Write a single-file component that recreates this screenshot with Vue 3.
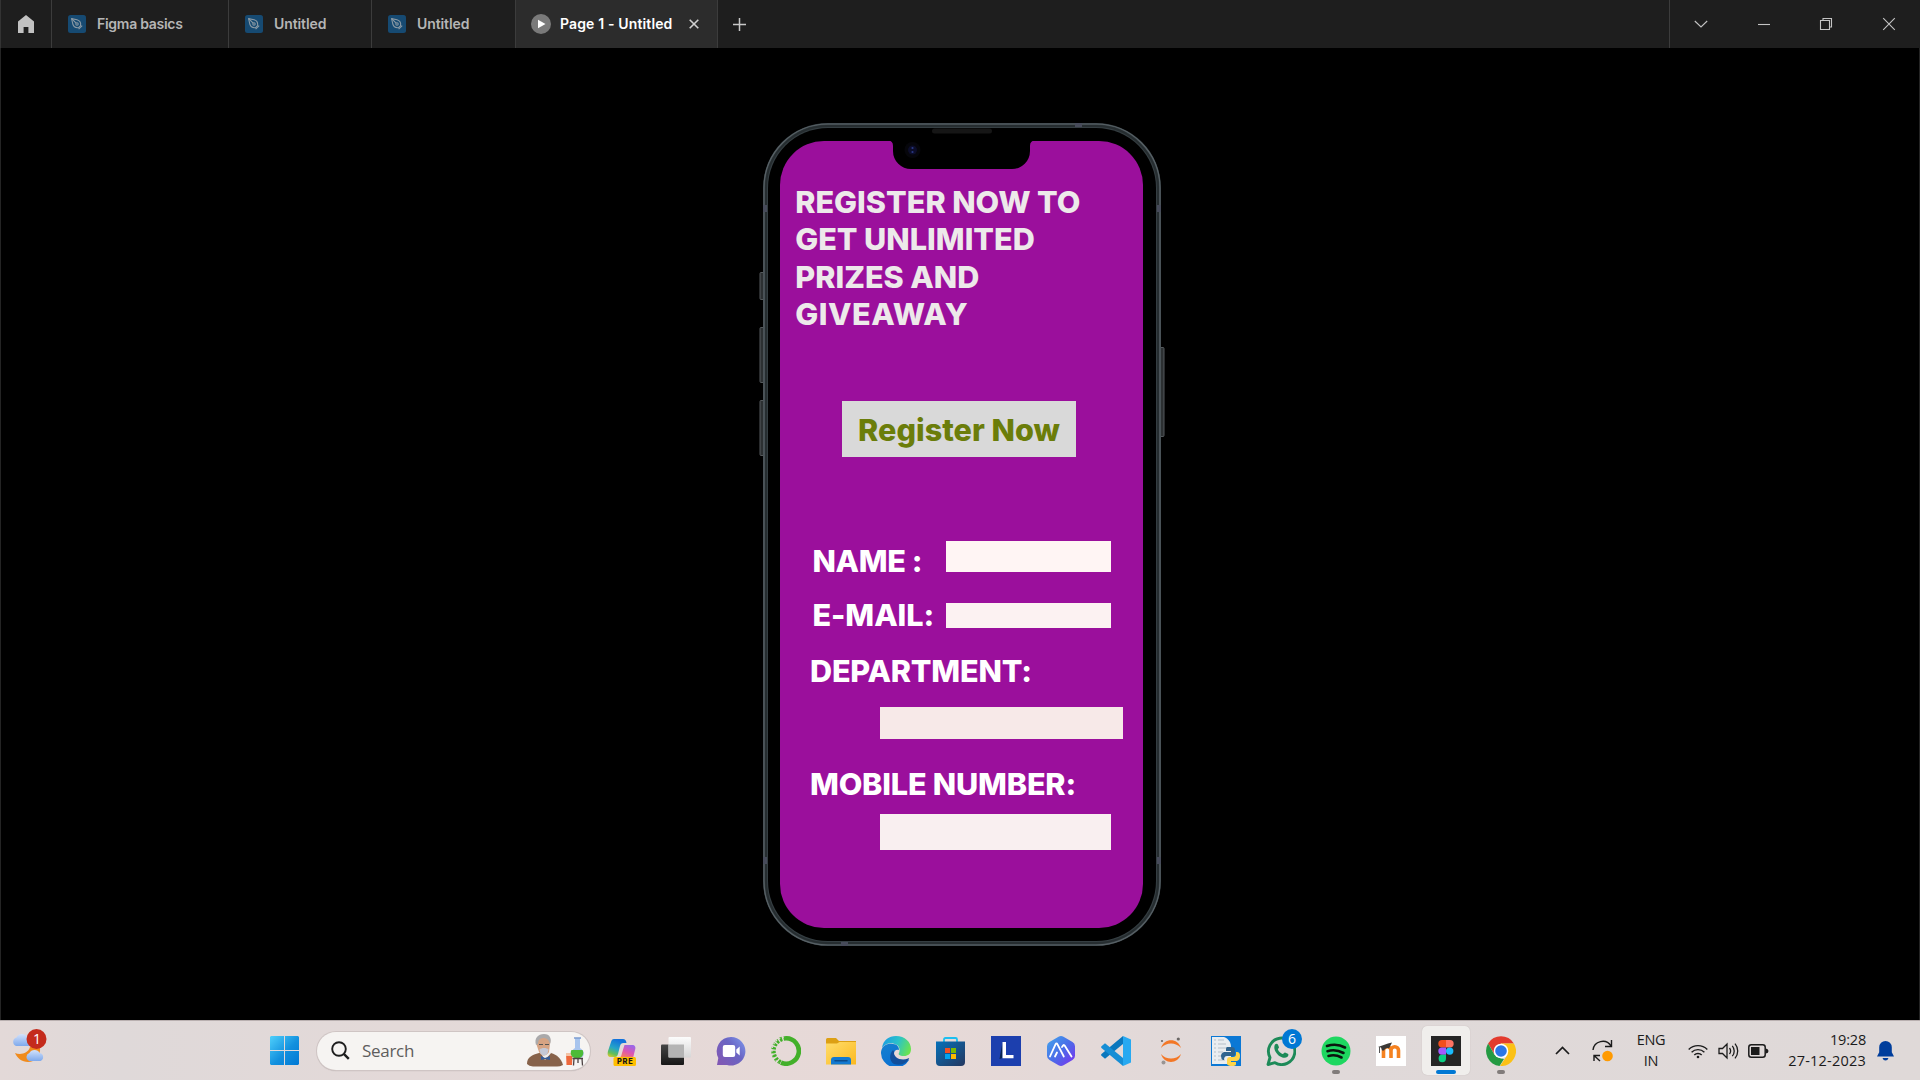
<script setup>
const tabs = [
  { label: 'Figma basics', width: 177, tight: true },
  { label: 'Untitled', width: 143 },
  { label: 'Untitled', width: 144 },
]
const headline = ['REGISTER NOW TO', 'GET UNLIMITED', 'PRIZES AND', 'GIVEAWAY']
</script>

<template>
  <div class="desktop">
    <header class="tabbar">
      <div class="home">
        <svg width="16" height="18" viewBox="0 0 16 18"><path d="M8 0 0 6.6V18h5.6v-6h4.8v6H16V6.6z" fill="#c2c2c2" /></svg>
      </div>
      <div v-for="(t, i) in tabs" :key="i" class="tab" :class="{ tight: t.tight }" :style="{ width: t.width + 'px' }">
        <svg class="file" width="18" height="18" viewBox="0 0 18 18">
          <rect width="18" height="18" rx="2.5" fill="#164a72" />
          <g fill="none" stroke="#8b9aa5" stroke-width="1.1" stroke-linejoin="round">
            <path d="M3.600 3.600 9 4.800c2.800.8 4 3 3.600 5.800L10.600 12.600C7.800 13 5.600 11.800 4.800 9z" />
            <path d="m10.600 14.200 3.600-3.600" /><path d="M3.600 3.600 8.200 8.200" /><circle cx="9" cy="9" r="1.200" />
          </g>
        </svg>
        <span>{{ t.label }}</span>
      </div>
      <div class="tab active">
        <svg width="20" height="20" viewBox="0 0 20 20"><circle cx="10" cy="10" r="10" fill="#7a7a7a" /><path d="M7 5.800 14.500 10 7 14.200z" fill="#fff" /></svg>
        <span>Page 1 - Untitled</span>
        <svg class="x" width="10" height="10" viewBox="0 0 10 10"><path d="m.7.7 8.600 8.600M9.300.7.7 9.300" stroke="#d0d0d0" stroke-width="1.600" /></svg>
      </div>
      <div class="plus">
        <svg width="13" height="13" viewBox="0 0 13 13"><path d="M6.500 0v13M0 6.500h13" stroke="#c8c8c8" stroke-width="1.500" /></svg>
      </div>
      <div class="controls">
        <svg viewBox="0 0 14 14"><path d="m.8 4 6.200 6 6.200-6" /></svg>
        <svg viewBox="0 0 14 14"><path d="M1 7.500h12" /></svg>
        <svg viewBox="0 0 14 14"><path d="M1.500 3.500h9v9h-9zM4 3.500v-2h8.500V10h-2" /></svg>
        <svg viewBox="0 0 14 14"><path d="m1.200 1.200 11.600 11.600M12.800 1.200 1.200 12.800" /></svg>
      </div>
    </header>

    <main class="stage">
      <div class="phone">
        <svg class="frame" width="406" height="823" viewBox="0 0 406 823">
          <g fill="#2c3032" stroke="#54595c" stroke-width="1">
            <rect x="1" y="149.500" width="5" height="27" rx="1" />
            <rect x="1" y="204.500" width="5" height="55" rx="1" />
            <rect x="1" y="277.500" width="5" height="55" rx="1" />
            <rect x="400.500" y="224.500" width="4.500" height="89" rx="1" />
          </g>
          <rect x="4" y="0" width="398" height="823" rx="65" fill="#353e42" />
          <rect x="5" y="1" width="396" height="821" rx="64" fill="none" stroke="#586166" stroke-width="1.200" />
          <rect x="7" y="3" width="392" height="817" rx="62" fill="none" stroke="#262d30" stroke-width="2" />
          <rect x="9" y="5" width="388" height="813" rx="60" fill="#000" />
          <g fill="#474b5a"><rect x="316" y="0" width="7" height="4" /><rect x="82" y="819" width="7" height="4" /><rect x="4" y="82" width="4" height="7" /><rect x="398" y="82" width="4" height="7" /><rect x="4" y="734" width="4" height="7" /><rect x="398" y="734" width="4" height="7" /></g>
        </svg>
        <section class="screen">
          <svg class="notch" width="147" height="46" viewBox="0 0 147 46">
            <path d="M0 17.500Q5 17.500 5 23v5a18 18 0 0 0 18 18h101a18 18 0 0 0 18-18v-5q0-5.500 5-5.500V14H0z" fill="#000" />
            <rect x="44" y="5.500" width="60" height="5" rx="2.500" fill="#161616" />
            <circle cx="24.500" cy="27" r="8" fill="#06060b" /><circle cx="24.500" cy="27" r="4.500" fill="#0c0d2a" />
            <circle cx="24.500" cy="25" r="1.100" fill="#2b3a86" /><circle cx="24.500" cy="29" r="1.100" fill="#2b3a86" />
          </svg>
          <h1><span v-for="l in headline" :key="l">{{ l }}</span></h1>
          <button class="cta">Register Now</button>
          <div class="row name"><label>NAME :</label><i></i></div>
          <div class="row mail"><label>E-MAIL:</label><i></i></div>
          <label class="dept">DEPARTMENT:</label>
          <i class="dept-box"></i>
          <label class="mobile">MOBILE NUMBER:</label>
          <i class="mobile-box"></i>
        </section>
      </div>
    </main>

    <footer class="taskbar">
      <div class="weather">
        <svg width="36" height="36" viewBox="0 0 36 36">
          <defs><linearGradient id="cl" x1="0" y1="0" x2="0" y2="1"><stop offset="0" stop-color="#d3e2fb" /><stop offset="1" stop-color="#7ea9ec" /></linearGradient></defs>
          <path d="M3 25c5 2 13 1 15-6l10 0c1 9-5 15-12 15-6 0-11-4-13-9z" fill="#f08b1d" />
          <path d="M4 18a4.500 4.500 0 0 1 .5-8.500 6 6 0 0 1 11 0A4.500 4.500 0 0 1 17 18z" fill="url(#cl)" />
          <path d="M17 33a4.300 4.300 0 0 1 .3-8 6 6 0 0 1 10.500 0 4.200 4.200 0 0 1 .7 8z" fill="url(#cl)" />
          <circle cx="24.500" cy="11" r="10" fill="#c42b1c" />
        </svg>
        <b>1</b>
      </div>

      <div class="center">
        <svg class="start" width="29" height="29" viewBox="0 0 29 29">
          <defs><linearGradient id="wn" x1="0" y1="0" x2="1" y2="1"><stop offset="0" stop-color="#4fd0fb" /><stop offset=".55" stop-color="#1290de" /><stop offset="1" stop-color="#0078d4" /></linearGradient></defs>
          <path d="M1 0h13v14H0V1zM15 0h13l1 1v13H15zM0 15h14v14H1l-1-1zM15 15h14v13l-1 1H15z" fill="url(#wn)" />
        </svg>
        <div class="search">
          <svg width="19" height="19" viewBox="0 0 19 19" fill="none" stroke="#1d1d1d"><circle cx="8" cy="8" r="6.800" stroke-width="1.900" /><path d="m12.800 12.800 5 5" stroke-width="2.400" /></svg>
          <span>Search</span>
          <svg class="art" width="57" height="34" viewBox="0 0 57 34">
            <path d="M0 30c0-7 5-9 12-11l12 0c6 2 10 5 12 12q-3 1.500-6 1.500H6Q2 32 0 30z" fill="#87624a" />
            <path d="m13 18 5 8 7-8z" fill="#eee" />
            <path d="M9 9c0-5 3-8 8-8s7 3 6 9l-1 8c-2 4-8 5-10 0z" fill="#d6a383" />
            <path d="M9 11C7 4 11 0 17 0c6 0 8 5 6 10-1-4-3-6-6-6-4 0-6 2-6 6z" fill="#aaa9aa" />
            <path d="M12.500 15.500c2-2 7-2 9 0l-1 4q-3.500 4-7 0z" fill="#c4c8d6" />
            <path d="M12 10.500h4M18 10.500h4" stroke="#555" /><path d="m14 22 4 2 5-2v4l-5-1-4 1z" fill="#355c99" />
            <path d="M39 19h6.500l-.5 12h-5.500z" fill="#ee683c" /><path d="M39 19h6.500v3H39z" fill="#f3c4a8" />
            <path d="M48 4h5v10c5 3 5 9 0 10h-5c-5-2-4-8 0-10z" fill="#a8c4ed" />
            <path d="M44.500 16h11c2 3 0 8-4 8h-3c-4 0-6-5-4-8z" fill="#4dbb37" /><path d="M47 4h7" stroke="#7d9ed0" stroke-width="1.500" />
            <path d="M45.500 24.500H56M47 24.500l-.5 7M55 24.500l.5 7M51 24.500V29" stroke="#4d4243" stroke-width="1.300" />
          </svg>
        </div>

        <div class="apps">
          <div class="app">
            <svg viewBox="0 0 30 30"><defs>
              <linearGradient id="cp1" x1=".4" y1="0" x2="0" y2="1"><stop offset="0" stop-color="#1272dc" /><stop offset=".45" stop-color="#25a5c7" /><stop offset=".75" stop-color="#65bf55" /><stop offset="1" stop-color="#f2cb27" /></linearGradient>
              <linearGradient id="cp2" x1=".7" y1="0" x2=".2" y2="1"><stop offset="0" stop-color="#9a67e8" /><stop offset=".5" stop-color="#dd55b1" /><stop offset="1" stop-color="#f88454" /></linearGradient></defs>
              <path d="M8 3h9c2 0 3 1 3.500 4h-3c-2 0-3 1-3.500 3l-2 8c-1 3-2 3-4 3H5c-3 0-4-2-3-6L5 6c.6-2 1.300-3 3-3z" fill="url(#cp1)" />
              <path d="M18.500 9H26c3 0 4 2 3 5l-2 8H13.500c1.500-1 2-3 2.500-5z" fill="url(#cp2)" />
              <rect x="7.500" y="21" width="22.500" height="9" rx="1.500" fill="#ffbf00" />
              <text x="19.200" y="28.200" text-anchor="middle" font-size="7.400" font-weight="800" letter-spacing=".7" fill="#151515">PRE</text></svg>
          </div>
          <div class="app">
            <svg viewBox="0 0 30 30"><defs><linearGradient id="tv" x1="0" y1="0" x2="0" y2="1"><stop offset="0" stop-color="#454545" /><stop offset="1" stop-color="#171717" /></linearGradient>
              <linearGradient id="tg" x1="0" y1="0" x2="0" y2="1"><stop offset="0" stop-color="#fcfcfc" /><stop offset="1" stop-color="#d6d6d6" /></linearGradient></defs>
              <rect x="0" y="8.500" width="23" height="20.500" rx="1" fill="url(#tv)" /><rect x="7.500" y="1" width="22.500" height="20.500" rx="1" fill="url(#tg)" /><path d="M7.500 8.500H23v13H7.500z" fill="#b4b4b4" /></svg>
          </div>
          <div class="app">
            <svg viewBox="0 0 30 30"><defs><linearGradient id="ch" x1="1" y1="0" x2="0" y2=".8"><stop offset="0" stop-color="#7f9cf0" /><stop offset=".45" stop-color="#6a65c4" /><stop offset="1" stop-color="#8058b4" /></linearGradient></defs>
              <path d="M15 1a14.300 14.300 0 1 1-4 28H1l1.300-7A14.300 14.300 0 0 1 15 1z" fill="url(#ch)" /><rect x="6.800" y="9" width="12.400" height="12" rx="2" fill="#fff" /><path d="m20.300 13.500 3.400-3v9l-3.400-3z" fill="#fff" /></svg>
          </div>
          <div class="app">
            <svg viewBox="0 0 30 30" fill="none" stroke="#43b02a"><path d="M15 2.300a12.700 12.700 0 1 1-5 24.300" stroke-width="4.600" /><path d="M15 2.300A12.700 12.700 0 0 0 10 26.600" stroke-width="4.400" stroke-dasharray="2.500 1.400" /><path d="M13 1A14 14 0 0 0 8 27" stroke="#e3d9d7" stroke-width="1.200" stroke-dasharray="1.800 2" /></svg>
          </div>
          <div class="app">
            <svg viewBox="0 0 30 30"><defs><linearGradient id="fo" x1="0" y1="0" x2="1" y2="1"><stop offset="0" stop-color="#ffdd6c" /><stop offset="1" stop-color="#fbb91f" /></linearGradient></defs>
              <path d="M0 3.500Q0 2 1.500 2H10l3 3h17v8H0z" fill="#dda014" /><path d="M0 7.500h11l2.500-1.500H30v22.500H0z" fill="url(#fo)" /><path d="M5 28.500V24q0-3 3-3h14q3 0 3 3v4.500z" fill="#1279d0" /><path d="M9 24.800h12" stroke="#0b4c8c" stroke-width="1.500" stroke-linecap="round" /></svg>
          </div>
          <div class="app">
            <svg viewBox="0 0 30 30"><defs>
              <linearGradient id="ed1" x1="0" y1=".3" x2="1" y2=".6"><stop offset="0" stop-color="#1b9de2" /><stop offset=".5" stop-color="#2bc3c9" /><stop offset="1" stop-color="#6be44e" /></linearGradient>
              <linearGradient id="ed2" x1="0" y1="0" x2=".6" y2="1"><stop offset="0" stop-color="#1581cf" /><stop offset="1" stop-color="#0a6fd3" /></linearGradient></defs>
              <path d="M1 12C2 4 8 0 15 0c9 0 15 6 15 13 0 5-3 7-7 7-5 0-6-2-5-3 1-2 1-6-2-8C11 6 4 7 1 12z" fill="url(#ed1)" />
              <path d="M0 16C1 9 7 7 12 8c4 0 6 3 6 6-3-1-5 1-5 4 0 6 7 10 14 6l1 0A15 15 0 0 1 0 16z" fill="url(#ed2)" />
              <path d="M12 14c-4 4-4 11 1 14 6 2 12 0 15-5 .5-.8 0-1-1-.500-7 3-15-1-14-7z" fill="#114f9c" /></svg>
          </div>
          <div class="app">
            <svg viewBox="0 0 30 30"><defs><linearGradient id="st" x1="0" y1="0" x2="1" y2="1"><stop offset="0" stop-color="#0671b9" /><stop offset="1" stop-color="#25375f" /></linearGradient></defs>
              <path d="M8 6V3.500Q8 2 9.500 2h10Q21 2 21 3.500V6" fill="none" stroke="#1cbff0" stroke-width="1.800" /><path d="M0 5.500h29V26q0 4-4 4H4q-4 0-4-4z" fill="url(#st)" />
              <path d="M9 12h5v5H9z" fill="#f25022" /><path d="M15 12h5v5h-5z" fill="#7fba00" /><path d="M9 18h5v5H9z" fill="#00a4ef" /><path d="M15 18h5v5h-5z" fill="#ffb900" /></svg>
          </div>
          <div class="app">
            <svg viewBox="0 0 30 30"><path d="M0 0h30v30H0z" fill="#1c3fae" /><path d="m11.500 6-3 17 3-1z" fill="#092450" /><path d="M11.500 6h3.500v13h7.500v3.200h-11z" fill="#fff" /></svg>
          </div>
          <div class="app">
            <svg viewBox="0 0 30 30"><defs><linearGradient id="hx" x1="0" y1="0" x2="1" y2="1"><stop offset="0" stop-color="#42a7ec" /><stop offset=".5" stop-color="#4a6de8" /><stop offset="1" stop-color="#7e2ff0" /></linearGradient></defs>
              <path d="M12.500.7q2.500-1.400 5 0l9 5.200q2.500 1.400 2.500 4.300v9.600q0 2.900-2.500 4.300l-9 5.200q-2.500 1.400-5 0l-9-5.200Q1 22.700 1 19.800v-9.600q0-2.900 2.500-4.300z" fill="url(#hx)" />
              <path d="M4 20.500 9.500 8.300q1-2 2 0l6.300 12.200M9 20.500l2-4M16 11l1.200-1.600q.8-.9 1.600.3L25.500 20.500" fill="none" stroke="#fff" stroke-width="1.800" stroke-linejoin="round" stroke-linecap="round" /></svg>
          </div>
          <div class="app">
            <svg viewBox="0 0 30 30"><path d="M22 0 30 3.500v23L22 30z" fill="#27a9f1" /><path d="M22 0v8L4 22.800l-3.500-3q-.8-.9 0-1.800z" fill="#0a77bd" /><path d="M22 30v-8L4 7.200l-3.500 3q-.8.9 0 1.800z" fill="#168ed5" /></svg>
          </div>
          <div class="app">
            <svg viewBox="0 0 30 30"><path d="M5 12C8 1.500 22 1.500 25 12 20 6 10 6 5 12zM5 18c3 10.500 17 10.500 20 0-5 6-15 6-20 0z" fill="#f37726" /><circle cx="22.300" cy="3" r="1.600" fill="#6b6766" /><circle cx="6" cy="5" r="1.100" fill="#6b6766" /><circle cx="7.500" cy="26.500" r="2" fill="#999594" /></svg>
          </div>
          <div class="app">
            <svg viewBox="0 0 30 30"><path d="M0 0h30v30H0z" fill="#0b78d5" /><path d="M1 1h12c5 2 7 6 7 10v17H1z" fill="#e9edf0" /><path d="M3 4h2M7 4h6M3 8h2M7 8h8M3 12h2M7 12h8M3 16h2M7 16h5M3 20h2M7 20h4M3 24h2M7 24h7" stroke="#b5bfc8" stroke-width="1.200" />
              <path d="M16 11h5q3 0 3 3v4q0 2-3 2h-5q-3 0-3 4h-1q-2-1-2-4t3-4h7v-1h-5v-2q0-2 1-2z" fill="#2f648f" /><path d="M25 16h1q3 0 3 4t-3 5h-6v1h5v2q0 2-4 2t-5-2v-4q0-3 3-3h3q3 0 3-3z" fill="#ffd447" /></svg>
          </div>
          <div class="app">
            <svg viewBox="0 0 30 30"><path d="M2 28.500 4 21.500A13.200 13.200 0 1 1 9 26.700z" fill="none" stroke="#1d8a58" stroke-width="2.900" stroke-linejoin="round" /><path d="M9 8.500c1-1 2.500-.8 3 .3l1 2.500c0 1-1.500 1.500-1 2.400 1 2 2.500 3.400 4.500 4.200 1 .3 1.500-1.500 2.500-1.500l2.800 1.300c1 .6.8 2-.3 3.100-5 4.200-16-5.300-12.500-12.300z" fill="#1d8a58" /></svg>
            <span class="badge">6</span>
          </div>
          <div class="app running">
            <svg viewBox="0 0 30 30"><circle cx="15" cy="15" r="14.500" fill="#1ed760" /><path d="M6 10c6-2 13-1.300 18 1.500M6.500 15.200c5-1.500 11-.9 16 1.800M7.500 20c4-1.200 9-.7 13 1.500" fill="none" stroke="#0b140e" stroke-width="2.600" stroke-linecap="round" /></svg>
          </div>
          <div class="app">
            <svg viewBox="0 0 30 30"><path d="M0 0h30v30H0z" fill="#fff" /><path d="M7.500 22v-7.500a3.700 3.700 0 0 1 7.500 0V22M15 14.500a3.700 3.700 0 0 1 7.500 0V22" fill="none" stroke="#f58220" stroke-width="3.600" /><path d="m2 11 10-3.500 4-1-3 6c-2-1-4 0-5 2H6l-1-3z" fill="#3a3836" /><path d="M3.500 11v6" stroke="#555" /></svg>
          </div>
          <div class="app current">
            <svg viewBox="0 0 30 30"><path d="M0 0h30v30H0z" fill="#252525" /><path d="M15 4h-4a3.700 3.700 0 0 0 0 7.400h4z" fill="#f24e1e" /><path d="M15 4h4a3.700 3.700 0 0 1 0 7.400h-4z" fill="#ff7262" /><path d="M15 11.400h-4a3.700 3.700 0 0 0 0 7.400h4z" fill="#a259ff" /><circle cx="18.700" cy="15.100" r="3.700" fill="#1abcfe" /><path d="M15 18.800h-4a3.700 3.700 0 1 0 4 3.700z" fill="#0acf83" /></svg>
          </div>
          <div class="app running">
            <svg viewBox="0 0 30 30"><path d="M2.100 7.500a15 15 0 0 1 25.800 0H15l-6.400 11z" fill="#e33b2e" /><path d="M2.100 7.500 8.500 18.700 15 22.500l3 .5-4.500 7A15 15 0 0 1 2.100 7.500z" fill="#249a42" /><path d="M15 7.500h12.900A15 15 0 0 1 14 30l7.500-11.200z" fill="#fbc116" /><circle cx="15" cy="15" r="7.300" fill="#fff" /><circle cx="15" cy="15" r="5.800" fill="#2b76e5" /></svg>
          </div>
        </div>
      </div>

      <div class="tray">
        <svg class="up" width="15" height="9" viewBox="0 0 15 9"><path d="m1 8 6.500-6.500L14 8" fill="none" stroke="#1b1b1b" stroke-width="1.700" /></svg>
        <svg class="sync" width="22" height="24" viewBox="0 0 22 24" fill="none" stroke="#1b1b1b" stroke-width="1.400"><path d="M1 11C2 2 14-1 19 7M19.500 1v6.500H13M8 22 2 16.500M8 16.500H2V22" /><circle cx="15.500" cy="17" r="5.300" fill="#ff9a00" stroke="none" /></svg>
        <div class="lang"><span>ENG</span><span>IN</span></div>
        <svg class="wifi" width="20" height="16" viewBox="0 0 20 16" fill="none" stroke="#1b1b1b" stroke-width="1.400"><path d="M.7 6.500a13 13 0 0 1 18.600 0M3.600 9.300a9 9 0 0 1 12.800 0M6.300 12a5.200 5.200 0 0 1 7.400 0" /><circle cx="10" cy="14" r="1.300" fill="#1b1b1b" stroke="none" /></svg>
        <svg class="vol" width="21" height="18" viewBox="0 0 21 18" fill="none" stroke="#1b1b1b" stroke-width="1.300"><path d="M1 6.500v5h3.500L9 16V2L4.500 6.500zM11.500 6a5 5 0 0 1 0 6M14.300 3.800a8 8 0 0 1 0 10.400M17 1.600a11.500 11.500 0 0 1 0 14.800" /></svg>
        <svg class="bat" width="21" height="14" viewBox="0 0 21 14"><rect x=".8" y=".8" width="16.400" height="12.400" rx="2.500" fill="none" stroke="#1b1b1b" stroke-width="1.500" /><path d="M3 3h8.500v8H3z" fill="#1b1b1b" /><path d="M18 4.500q2.500.5 2.500 2.500T18 9.500z" fill="#1b1b1b" /></svg>
        <div class="clock"><span>19:28</span><span class="date">27-12-2023</span></div>
        <svg class="bell" width="17" height="20" viewBox="0 0 17 20"><path d="M8.500 0a6.300 6.300 0 0 1 6.300 6.300v5L17 15.500H0l2.200-4.200v-5A6.300 6.300 0 0 1 8.500 0zM5.500 17h6q-.8 2.500-3 2.500t-3-2.500z" fill="#003e9c" /></svg>
      </div>
    </footer>
  </div>
</template>

<style>
body { background: #000; overflow: hidden; }
</style>

<style scoped>
* { box-sizing: border-box; }
.desktop { width: 1920px; height: 1080px; display: flex; flex-direction: column; background: #000; font-family: Inter, sans-serif; }
.desktop svg { display: block; flex: none; }

.tabbar { height: 48px; flex: none; display: flex; background: #1e1e1e; border-left: 1px solid #333; }
.home { width: 51px; padding: 15px 0 0 17px; border-right: 1px solid #3c3c3c; }
.tab { display: flex; align-items: center; padding-left: 16px; border-right: 1px solid #3c3c3c; color: #b5b5b5; font-size: 14px; font-weight: 600; letter-spacing: -.1px; white-space: nowrap; }
.tab.tight { letter-spacing: -.28px; }
.tab .file { margin-right: 11px; }
.tab span { margin-top: -1px; }
.tab.active { width: 202px; padding-left: 15px; background: #2c2c2c; color: #fff; letter-spacing: .14px; }
.active span { margin-left: 9px; width: 113px; }
.active .x { margin-left: 15.500px; }
.plus { padding: 18px 0 0 15px; }
.controls { margin-left: auto; width: 251px; display: flex; align-items: center; padding-left: 24px; gap: 48.700px; border-left: 1px solid #3c3c3c; }
.controls svg { width: 14px; height: 14px; fill: none; stroke: #c4c4c4; stroke-width: 1.1; }

.stage { height: 972px; flex: none; border: solid #242424; border-width: 0 1px; padding: 75px 0 0 758px; }
.phone { position: relative; width: 406px; height: 823px; padding: 18px 0 0 21px; }
.frame { position: absolute; left: 0; top: 0; }
.screen { position: relative; width: 363px; height: 787px; border-radius: 44px; background: #9b0f9c; padding-top: 42px; display: flex; flex-direction: column; align-items: flex-start; }
.notch { position: absolute; left: 108px; top: -18px; }
h1 { margin: 0; padding-left: 15.200px; height: 150px; font-size: 30.600px; font-weight: 770; line-height: 37.350px; letter-spacing: 0; word-spacing: -.2px; color: #ede9ea; white-space: nowrap; }
h1 span { display: block; }
h1 span:last-child { letter-spacing: .5px; }
.cta { margin: 68.200px 0 0 62px; width: 234px; height: 56px; flex: none; border: 0; padding: 1px 0 0; background: #d9d9d9; color: #6b7d0a; font: 800 30.600px Inter, sans-serif; white-space: nowrap; }
label { font-size: 30.600px; font-weight: 770; line-height: 38px; height: 38px; flex: none; color: #fff; letter-spacing: -.2px; white-space: nowrap; }
i { display: block; flex: none; }
.row { display: flex; align-items: flex-start; padding-left: 32px; height: 39px; flex: none; }
.row label { width: 134px; padding-left: .5px; }
.row i { width: 165px; }
.name { margin-top: 83.800px; }
.name label { margin-top: 1px; letter-spacing: -.4px; }
.name i { height: 31px; background: #fff5f4; }
.mail { margin-top: 16px; }
.mail label { margin-top: .4px; letter-spacing: -.1px; }
.mail i { margin-top: 7px; height: 24.700px; background: #fcf2f2; }
.dept { margin: 17px 0 0 30px; }
.dept-box { margin: 17px 0 0 99.500px; width: 243.500px; height: 32.400px; background: #f7e9e8; }
.mobile { margin: 25.600px 0 0 30px; }
.mobile-box { margin: 11px 0 0 99.500px; width: 231.500px; height: 36px; background: #f9eff0; }

.taskbar { height: 60px; flex: none; display: flex; position: relative; border-top: 1px solid #b9b0b0; background: linear-gradient(90deg, #e3d9d8 0, #dfd9d9 120px, #e3d9d8 400px, #e7d9d7 900px, #e0d9d9 1250px, #dfd9d8 1920px); font-family: "Open Sans", "Noto Sans", sans-serif; color: #1b1b1b; }
.weather { position: relative; width: 270px; padding: 7px 0 0 12px; }
.weather b { position: absolute; left: 27px; top: 8px; width: 20px; text-align: center; font-size: 14px; font-weight: 400; line-height: 20px; color: #fff; }
.center { display: flex; align-items: center; }
.start { margin-right: 18px; }
.search { width: 273px; height: 38px; border-radius: 19px; display: flex; align-items: center; padding-left: 14px; background: #f6f4f2; box-shadow: 0 0 0 1px #cfc5c4, 0 1px 1px #a8a0a0; color: #5e5d5d; font-size: 17px; }
.search span { margin: 0 0 0 12px; letter-spacing: -.3px; }
.search .art { margin-left: auto; margin-right: 6px; }
.apps { display: flex; margin-left: 3px; }
.app { position: relative; width: 55px; height: 59px; display: flex; align-items: center; justify-content: center; font-family: Inter, sans-serif; }
.app svg { position: relative; width: 30px; height: 30px; }
.badge { position: absolute; left: 29px; top: 8px; width: 20px; height: 20px; border-radius: 10px; background: #0078d4; color: #fff; font: 14px/20px "Open Sans", sans-serif; text-align: center; }
.running::after, .current::after { content: ""; position: absolute; bottom: 6px; left: 24px; width: 8px; height: 4px; border-radius: 2px; background: #817c7b; }
.current::before { content: ""; position: absolute; left: 3.500px; top: 5px; width: 48px; height: 49px; border-radius: 5px; background: #f0eeec; box-shadow: 0 0 1px #b5adac; }
.current::after { left: 18px; width: 20px; background: #0078d4; }
.tray { flex: 1; display: flex; align-items: flex-start; font-size: 14.500px; line-height: 20.600px; }
.tray span { display: block; white-space: nowrap; }
.up { margin: 25px 0 0 27px; }
.sync { margin: 18px 0 0 22px; }
.lang { width: 48px; margin: 9px 0 0 13px; text-align: center; letter-spacing: -.3px; }
.wifi { margin: 22px 0 0 13px; }
.vol { margin: 21px 0 0 10px; }
.bat { margin: 23px 0 0 9px; }
.clock { width: 97px; margin-top: 9px; text-align: right; letter-spacing: -.2px; }
.clock .date { letter-spacing: .22px; }
.bell { margin: 20px 0 0 11px; }
</style>
